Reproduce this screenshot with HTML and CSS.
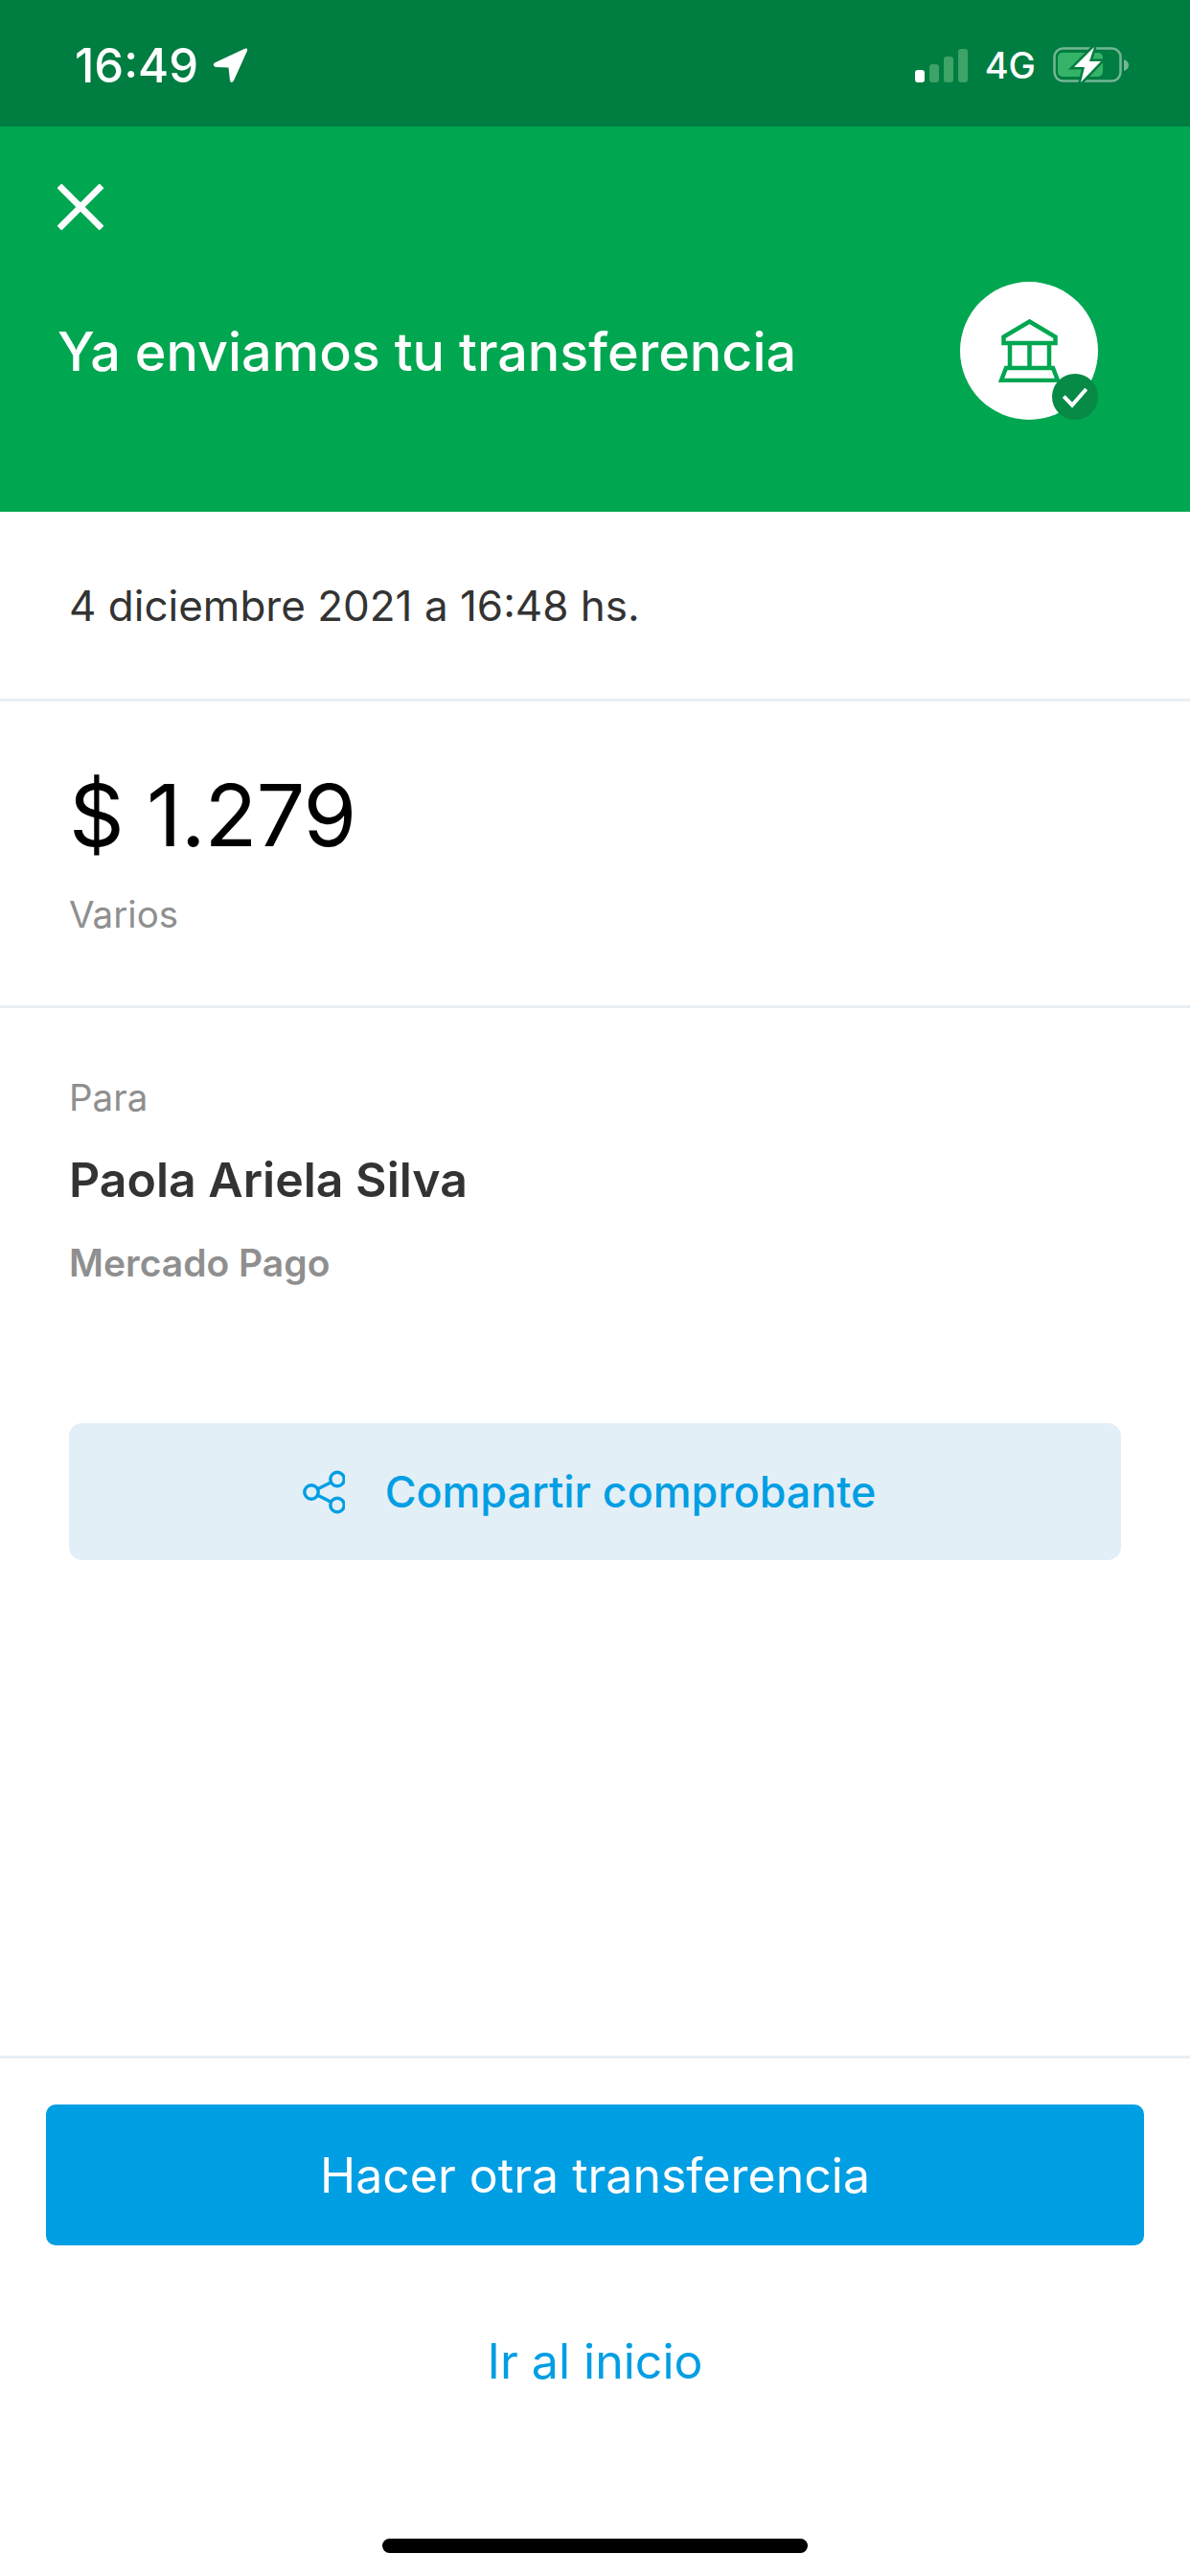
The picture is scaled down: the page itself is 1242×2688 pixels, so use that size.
FILE: index.html
```html
<!DOCTYPE html>
<html>
<head>
    <title>Ya enviamos tu transferencia</title>
    <link rel="stylesheet" href="styles.css">
</head>
<body>
    <div class="screen">
        <div class="status-bar">
            <div class="status-left">
                <span class="clock">16:49</span>
                <svg class="location" viewBox="0 0 37 37"><path d="M2 15.5 L33 1 Q37 -0.5 36 3 L22 34 Q19.5 38 18 34 L16.5 20.5 L3 20 Q-1 18 2 15.5 Z" fill="#fff"/></svg>
            </div>
            <div class="status-right">
                <div class="signal">
                    <span class="bar bar-1"></span>
                    <span class="bar bar-2"></span>
                    <span class="bar bar-3"></span>
                    <span class="bar bar-4"></span>
                </div>
                <span class="network">4G</span>
                <svg class="battery" viewBox="0 0 80 38">
                    <rect x="1.5" y="1.5" width="69" height="34" rx="9" fill="none" stroke="#fff" stroke-opacity="0.45" stroke-width="2.5"/>
                    <rect x="5" y="6" width="47" height="25" rx="5" fill="#35b368"/>
                    <path d="M74 13 Q79 15 79 19 Q79 23 74 25 Z" fill="#fff" fill-opacity="0.45"/>
                    <path d="M43 0 L22 21 L33 21 L29 37 L50 15 L38 15 Z" fill="#fff" stroke="#007d40" stroke-width="5" paint-order="stroke"/>
                </svg>
            </div>
        </div>

        <header class="hero">
            <svg class="close" viewBox="0 0 50 50"><path d="M2 2 L48 48 M48 2 L2 48" stroke="#fff" stroke-width="7" fill="none"/></svg>
            <div class="hero-row">
                <h1>Ya enviamos tu transferencia</h1>
                <div class="bank-badge">
                    <svg class="bank" viewBox="0 0 65 66">
                        <path d="M32.5 2.5 L59.5 18.5 L59.5 25 L5.5 25 L5.5 18.5 Z" fill="none" stroke="#00a650" stroke-width="4.5"/>
                        <path d="M12 27 L12 49 M32.5 27 L32.5 49 M53 27 L53 49" stroke="#00a650" stroke-width="4.5" fill="none"/>
                        <path d="M8 51 L57 51 L62 64 L3 64 Z" fill="none" stroke="#00a650" stroke-width="4.5"/>
                    </svg>
                    <span class="check">
                        <svg viewBox="0 0 48 48"><path d="M12.3 23.7 L21 32.7 L35.7 16" stroke="#fff" stroke-width="4" fill="none"/></svg>
                    </span>
                </div>
            </div>
        </header>

        <section class="row date-row">4 diciembre 2021 a 16:48 hs.</section>

        <section class="row amount-row">
            <div class="amount">$ 1.279</div>
            <div class="muted">Varios</div>
        </section>

        <section class="row to-row">
            <div class="muted">Para</div>
            <div class="name">Paola Ariela Silva</div>
            <div class="bank-name">Mercado Pago</div>
            <button class="share-btn">
                <svg class="share" viewBox="0 0 44 46">
                    <circle cx="9" cy="23" r="7.2" fill="none" stroke="#009ee3" stroke-width="3.4"/>
                    <circle cx="36" cy="9.5" r="7.2" fill="none" stroke="#009ee3" stroke-width="3.4"/>
                    <circle cx="36" cy="36.5" r="7.2" fill="none" stroke="#009ee3" stroke-width="3.4"/>
                    <path d="M15.5 19.7 L29.5 12.8 M15.5 26.3 L29.5 33.2" stroke="#009ee3" stroke-width="3.4" fill="none"/>
                </svg>
                Compartir comprobante
            </button>
        </section>

        <footer class="actions">
            <button class="primary-btn">Hacer otra transferencia</button>
            <a class="link-btn">Ir al inicio</a>
            <div class="home-bar"></div>
        </footer>
    </div>
</body>
</html>
```

FILE: styles.css
```css
* {
    box-sizing: border-box;
}
body {
    margin: 0;
    background: #fff;
    font-family: Inter, "Open Sans", sans-serif;
    color: #333;
}
.screen {
    width: 1242px;
    height: 2688px;
    display: flex;
    flex-direction: column;
    overflow: hidden;
}
.status-bar {
    height: 132px;
    background: #007d40;
    display: flex;
    justify-content: space-between;
    align-items: center;
    padding: 4px 63px 0 78px;
    color: #fff;
}
.status-left, .status-right {
    display: flex;
    align-items: center;
}
.clock {
    font-size: 49px;
    font-weight: 500;
}
.location {
    width: 37px;
    height: 37px;
    margin-left: 15px;
}
.signal {
    display: flex;
    align-items: flex-end;
    gap: 5px;
    height: 35px;
}
.bar {
    width: 10px;
    border-radius: 3px;
    background: #3da367;
}
.bar-1 { height: 13px; background: #fff; }
.bar-2 { height: 19px; }
.bar-3 { height: 27px; }
.bar-4 { height: 35px; }
.network {
    font-size: 38px;
    font-weight: 500;
    margin-left: 18px;
}
.battery {
    width: 80px;
    height: 38px;
    margin-left: 18px;
}
.hero {
    height: 402px;
    background: #00a650;
    padding: 60px 96px 0 60px;
}
.close {
    display: block;
    width: 48px;
    height: 48px;
}
.hero-row {
    display: flex;
    justify-content: space-between;
    align-items: center;
    margin-top: 54px;
}
.hero h1 {
    margin: 0;
    font-size: 55.7px;
    font-weight: 500;
    color: #fff;
}
.bank-badge {
    position: relative;
    width: 144px;
    height: 144px;
    border-radius: 50%;
    background: #fff;
    display: flex;
    align-items: center;
    justify-content: center;
}
.bank {
    width: 65px;
    height: 66px;
}
.check {
    position: absolute;
    right: 0;
    bottom: 0;
    width: 48px;
    height: 48px;
    border-radius: 50%;
    background: #068a45;
}
.check svg {
    display: block;
    width: 48px;
    height: 48px;
}
.row {
    padding: 0 72px;
    border-bottom: 3px solid #e6eff5;
}
.date-row {
    height: 198px;
    display: flex;
    align-items: center;
    font-size: 44px;
}
.amount-row {
    height: 320px;
    padding-top: 63px;
}
.amount {
    font-size: 90px;
    line-height: 112px;
    color: #000;
    letter-spacing: -1px;
}
.muted {
    font-size: 38.5px;
    line-height: 48px;
    color: #8f8f8f;
}
.amount-row .muted {
    margin-top: 23px;
}
.to-row {
    flex: 1;
    padding-top: 69px;
}
.name {
    font-size: 50px;
    line-height: 60px;
    font-weight: 600;
    margin-top: 32px;
}
.bank-name {
    font-size: 39px;
    line-height: 48px;
    font-weight: 600;
    color: #8f8f8f;
    margin-top: 33px;
}
.share-btn {
    width: 1098px;
    height: 143px;
    margin-top: 143px;
    padding: 0 12px 0 0;
    border: none;
    border-radius: 14px;
    background: #e3eff7;
    color: #009ee3;
    font-family: inherit;
    font-size: 44.8px;
    font-weight: 550;
    display: flex;
    align-items: center;
    justify-content: center;
}
.share {
    width: 44px;
    height: 46px;
    margin-right: 42px;
}
.actions {
    height: 540px;
    padding: 48px 48px 0;
    display: flex;
    flex-direction: column;
    align-items: center;
}
.primary-btn {
    width: 100%;
    height: 147px;
    border: none;
    border-radius: 10px;
    background: #009ee3;
    color: #fff;
    font-family: inherit;
    font-size: 50px;
}
.link-btn {
    margin-top: 91px;
    font-size: 50px;
    line-height: 60px;
    color: #009ee3;
}
.home-bar {
    width: 444px;
    height: 15px;
    border-radius: 8px;
    background: #000;
    margin-top: 155px;
}
```
